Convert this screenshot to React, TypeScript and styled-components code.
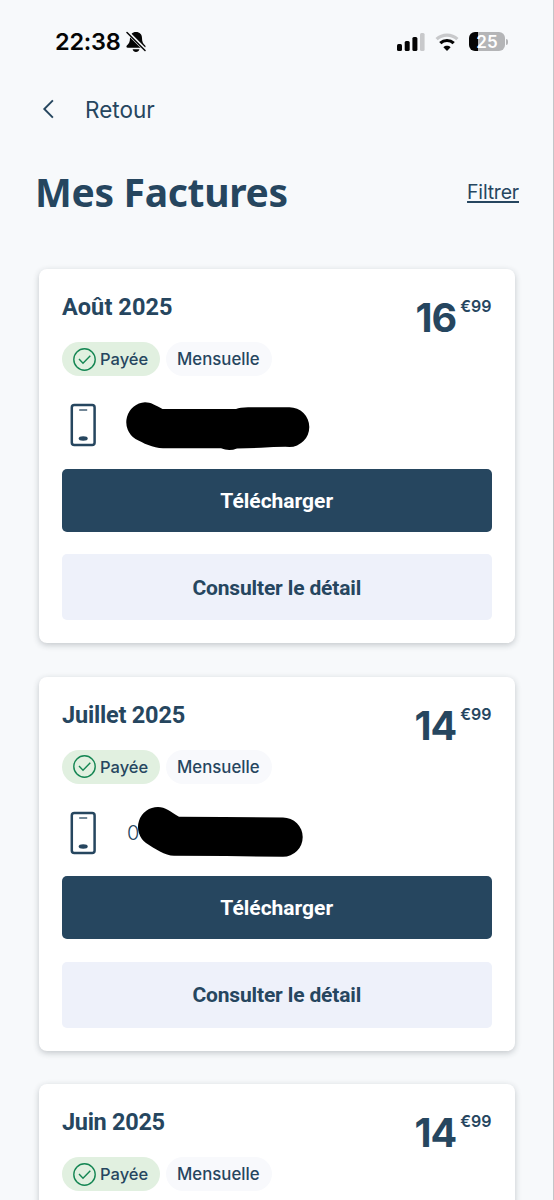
import React from "react";
import styled, { createGlobalStyle } from "styled-components";

const navy = "#26465f";

const Global = createGlobalStyle`
  *, *::before, *::after { box-sizing: border-box; }
  html, body { margin: 0; padding: 0; background: #f7f9fb; }
  body { font-family: Inter, "Liberation Sans", sans-serif; color: ${navy}; }
  svg { display: block; flex: none; }
`;

const Screen = styled.main`
  width: 554px;
  height: 1200px;
  overflow: hidden;
  background: #f7f9fb;
  border-right: 1px solid #c3c5c8;
`;

const StatusBar = styled.header`
  height: 82px;
  padding: 1px 45px 0 55px;
  display: flex;
  align-items: center;
  justify-content: space-between;
`;

const Clock = styled.div`
  display: flex;
  align-items: center;
  gap: 5px;
  color: #050505;
  font-size: 23.5px;
  font-weight: 600;
  line-height: 28px;
  letter-spacing: -0.25px;
`;

const Indicators = styled.div`
  display: flex;
  align-items: center;
  gap: 10px;
`;

const Battery = styled.div`
  display: flex;
  align-items: center;
  gap: 1px;
`;

const BatteryBody = styled.div`
  width: 36px;
  height: 19px;
  border-radius: 6px;
  background: linear-gradient(90deg, #050505 0 26%, #b4b5b7 26%);
  color: #fff;
  font-size: 17px;
  font-weight: 600;
  line-height: 20px;
  text-align: center;
`;

const BatteryTip = styled.div`
  width: 2px;
  height: 6px;
  border-radius: 0 2px 2px 0;
  background: #b4b5b7;
`;

const BackLink = styled.nav`
  height: 54px;
  padding-left: 42px;
  display: flex;
  align-items: center;
  gap: 31px;
  font-size: 22.5px;
  line-height: 28px;
  span { padding-top: 1px; }
`;

const Heading = styled.div`
  height: 133px;
  padding: 29px 34px 0 35px;
  display: flex;
  justify-content: space-between;
  align-items: flex-start;
`;

const PageTitle = styled.h1`
  margin: 0;
  font-family: "Noto Sans", "Open Sans", sans-serif;
  font-size: 39px;
  font-weight: 700;
  line-height: 54px;
  letter-spacing: -0.3px;
  white-space: nowrap;
`;

const FilterLink = styled.a`
  margin-top: 13px;
  font-size: 19.5px;
  line-height: 28px;
  letter-spacing: -0.2px;
  text-decoration: underline;
  text-decoration-thickness: 1.5px;
  text-underline-offset: 2px;
`;

const Bills = styled.section`
  padding: 0 38.5px 0 39px;
  display: flex;
  flex-direction: column;
  gap: 33.5px;
`;

const Card = styled.article`
  height: 374px;
  flex: none;
  padding: 22px 23px 0;
  border-radius: 8px;
  background: #fff;
  box-shadow: 0 2px 6px rgba(30, 40, 50, 0.24);
`;

const CardTop = styled.div`
  height: 51px;
  display: flex;
  justify-content: space-between;
`;

const Month = styled.h2<{ $spacing: number }>`
  margin: 0;
  font-family: Roboto, sans-serif;
  font-size: 23.5px;
  font-weight: 700;
  line-height: 32px;
  letter-spacing: ${(p) => p.$spacing}px;
`;

const Price = styled.div`
  display: flex;
  align-items: flex-start;
  gap: 4px;
  font-weight: 700;
`;

const Euros = styled.span`
  padding-top: 7px;
  font-size: 39.5px;
  line-height: 40px;
  letter-spacing: -1px;
`;

const Cents = styled.span`
  padding-top: 5px;
  font-size: 16px;
  line-height: 20px;
  font-weight: 600;
`;

const Tags = styled.div`
  display: flex;
  gap: 6px;
`;

const Tag = styled.span<{ $paid?: boolean }>`
  width: ${(p) => (p.$paid ? 98 : 106)}px;
  height: 34px;
  padding-left: 11px;
  display: flex;
  align-items: center;
  gap: 4px;
  border-radius: 17px;
  background: ${(p) => (p.$paid ? "#e1f0e0" : "#f8f9fc")};
  font-size: ${(p) => (p.$paid ? 16.5 : 16.8)}px;
  font-weight: 500;
  white-space: nowrap;
`;

const Line = styled.div`
  height: 92.6px;
  padding: 27px 0 0 8px;
  display: flex;
  gap: 20px;
`;

const NumberBox = styled.div`
  position: relative;
  width: 210px;
  height: 52px;
  padding: 8px 0 0 10px;
  font-size: 20px;
  line-height: 28px;
  font-weight: 300;
`;

const Scribble = styled.svg`
  position: absolute;
  left: -1px;
  top: -6px;
`;

const Button = styled.button<{ $primary?: boolean }>`
  display: block;
  width: 100%;
  height: ${(p) => (p.$primary ? 63 : 66)}px;
  margin: 0 0 ${(p) => (p.$primary ? 22.7 : 0)}px;
  padding: 1px 0 0;
  border: 0;
  border-radius: 5px;
  background: ${(p) => (p.$primary ? navy : "#eef1fa")};
  color: ${(p) => (p.$primary ? "#fff" : navy)};
  font-family: Roboto, sans-serif;
  font-size: 21px;
  font-weight: 700;
  letter-spacing: ${(p) => (p.$primary ? 0 : -0.15)}px;
`;

const MutedBell = () => (
  <svg width="20" height="22" viewBox="0 0 20 22">
    <path d="M10 1c-3.7 0-6 2.5-6 6 0 4-1.1 5.5-2.9 7.3-1.1 1.1-.8 2.5.7 2.5h16.4c1.5 0 1.8-1.4.7-2.5C17.1 12.5 16 11 16 7c0-3.5-2.3-6-6-6ZM6.6 18.2h6.8c-.5 1.8-1.7 2.7-3.4 2.7s-2.9-.9-3.4-2.7Z" fill="#050505" />
    <path d="M2 1.8 19.2 19" stroke="#f7f9fb" strokeWidth="3.6" />
    <path d="M1 1.5 19 19.5" stroke="#050505" strokeWidth="1.5" strokeLinecap="round" />
  </svg>
);

const Signal = () => (
  <svg width="28" height="18" viewBox="0 0 28 18">
    <rect x="0" y="11" width="5" height="7" rx="1.5" fill="#050505" />
    <rect x="7.7" y="8" width="5" height="10" rx="1.5" fill="#050505" />
    <rect x="15.4" y="4" width="5" height="14" rx="1.5" fill="#050505" />
    <rect x="23" y="0" width="4.6" height="18" rx="1.5" fill="#c8c9cb" />
  </svg>
);

const Wifi = () => (
  <svg width="24" height="18" viewBox="0 0 24 18">
    <path d="M1.6 6.2c5.8-5.5 15-5.5 20.8 0" fill="none" stroke="#c8c9cb" strokeWidth="3.2" />
    <path d="M5.3 10.2c3.8-3.6 9.6-3.6 13.4 0" fill="none" stroke="#050505" strokeWidth="3.2" />
    <path d="m12 18-3.6-3.8c2-1.9 5.2-1.9 7.2 0Z" fill="#050505" />
  </svg>
);

const Chevron = () => (
  <svg width="12" height="20" viewBox="0 0 12 20">
    <path d="M10.9 1.4 2.3 10l8.6 8.6" fill="none" stroke={navy} strokeWidth="1.9" />
  </svg>
);

const Check = () => (
  <svg width="23" height="23" viewBox="0 0 23 23" fill="none" stroke="#158653" strokeWidth="1.4">
    <circle cx="11.5" cy="11.5" r="10.7" />
    <path d="m6 11.1 4 4.1 7.3-7.5" />
  </svg>
);

const Phone = () => (
  <svg width="27" height="44" viewBox="0 0 27 44">
    <rect x="1.8" y="2" width="22.8" height="40" rx="2.5" fill="none" stroke={navy} strokeWidth="2.5" />
    <path d="M9.2 7h8" stroke={navy} strokeWidth="1.3" />
    <ellipse cx="13.2" cy="35.5" rx="4.5" ry="2.2" fill={navy} />
  </svg>
);

const scribbles = {
  long: "M29 5.2C35 5.2 39 8 46.5 12H120Q124 10.3 132 10.3H173.5a19.8 19.8 0 0 1 0 39.6Q160 49.7 145 50.8L121 51.4Q113 54.5 105 51.2H47C37 51.2 27 46 19.5 42A20 20 0 0 1 29 5.2Z",
  short: "M42 2C49 2 55 7 63 11.8L107 12 167 12.4a19.7 19.7 0 0 1 0 39.4L110 51 58 50.8C49 50.5 39 44 30 38A20 20 0 0 1 42 2Z",
};

type Bill = { month: string; euros: string; spacing: number; mark?: keyof typeof scribbles; digits?: string };

const bills: Bill[] = [
  { month: "Août 2025", euros: "16", spacing: 0.1, mark: "long" },
  { month: "Juillet 2025", euros: "14", spacing: -0.2, mark: "short", digits: "0" },
  { month: "Juin 2025", euros: "14", spacing: -0.3 },
];

const BillCard = ({ month, euros, spacing, mark, digits }: Bill) => (
  <Card>
    <CardTop>
      <Month $spacing={spacing}>{month}</Month>
      <Price>
        <Euros>{euros}</Euros>
        <Cents>€99</Cents>
      </Price>
    </CardTop>
    <Tags>
      <Tag $paid><Check />Payée</Tag>
      <Tag>Mensuelle</Tag>
    </Tags>
    {mark && (
      <>
        <Line>
          <Phone />
          <NumberBox>
            {digits}
            <Scribble width="210" height="60" viewBox="0 0 210 60">
              <path d={scribbles[mark]} />
            </Scribble>
          </NumberBox>
        </Line>
        <Button $primary>Télécharger</Button>
        <Button>Consulter le détail</Button>
      </>
    )}
  </Card>
);

export default function App() {
  return (
    <Screen>
      <Global />
      <StatusBar>
        <Clock>22:38<MutedBell /></Clock>
        <Indicators>
          <Signal />
          <Wifi />
          <Battery><BatteryBody>25</BatteryBody><BatteryTip /></Battery>
        </Indicators>
      </StatusBar>
      <BackLink><Chevron /><span>Retour</span></BackLink>
      <Heading>
        <PageTitle>Mes Factures</PageTitle>
        <FilterLink>Filtrer</FilterLink>
      </Heading>
      <Bills>
        {bills.map((bill) => <BillCard key={bill.month} {...bill} />)}
      </Bills>
    </Screen>
  );
}
